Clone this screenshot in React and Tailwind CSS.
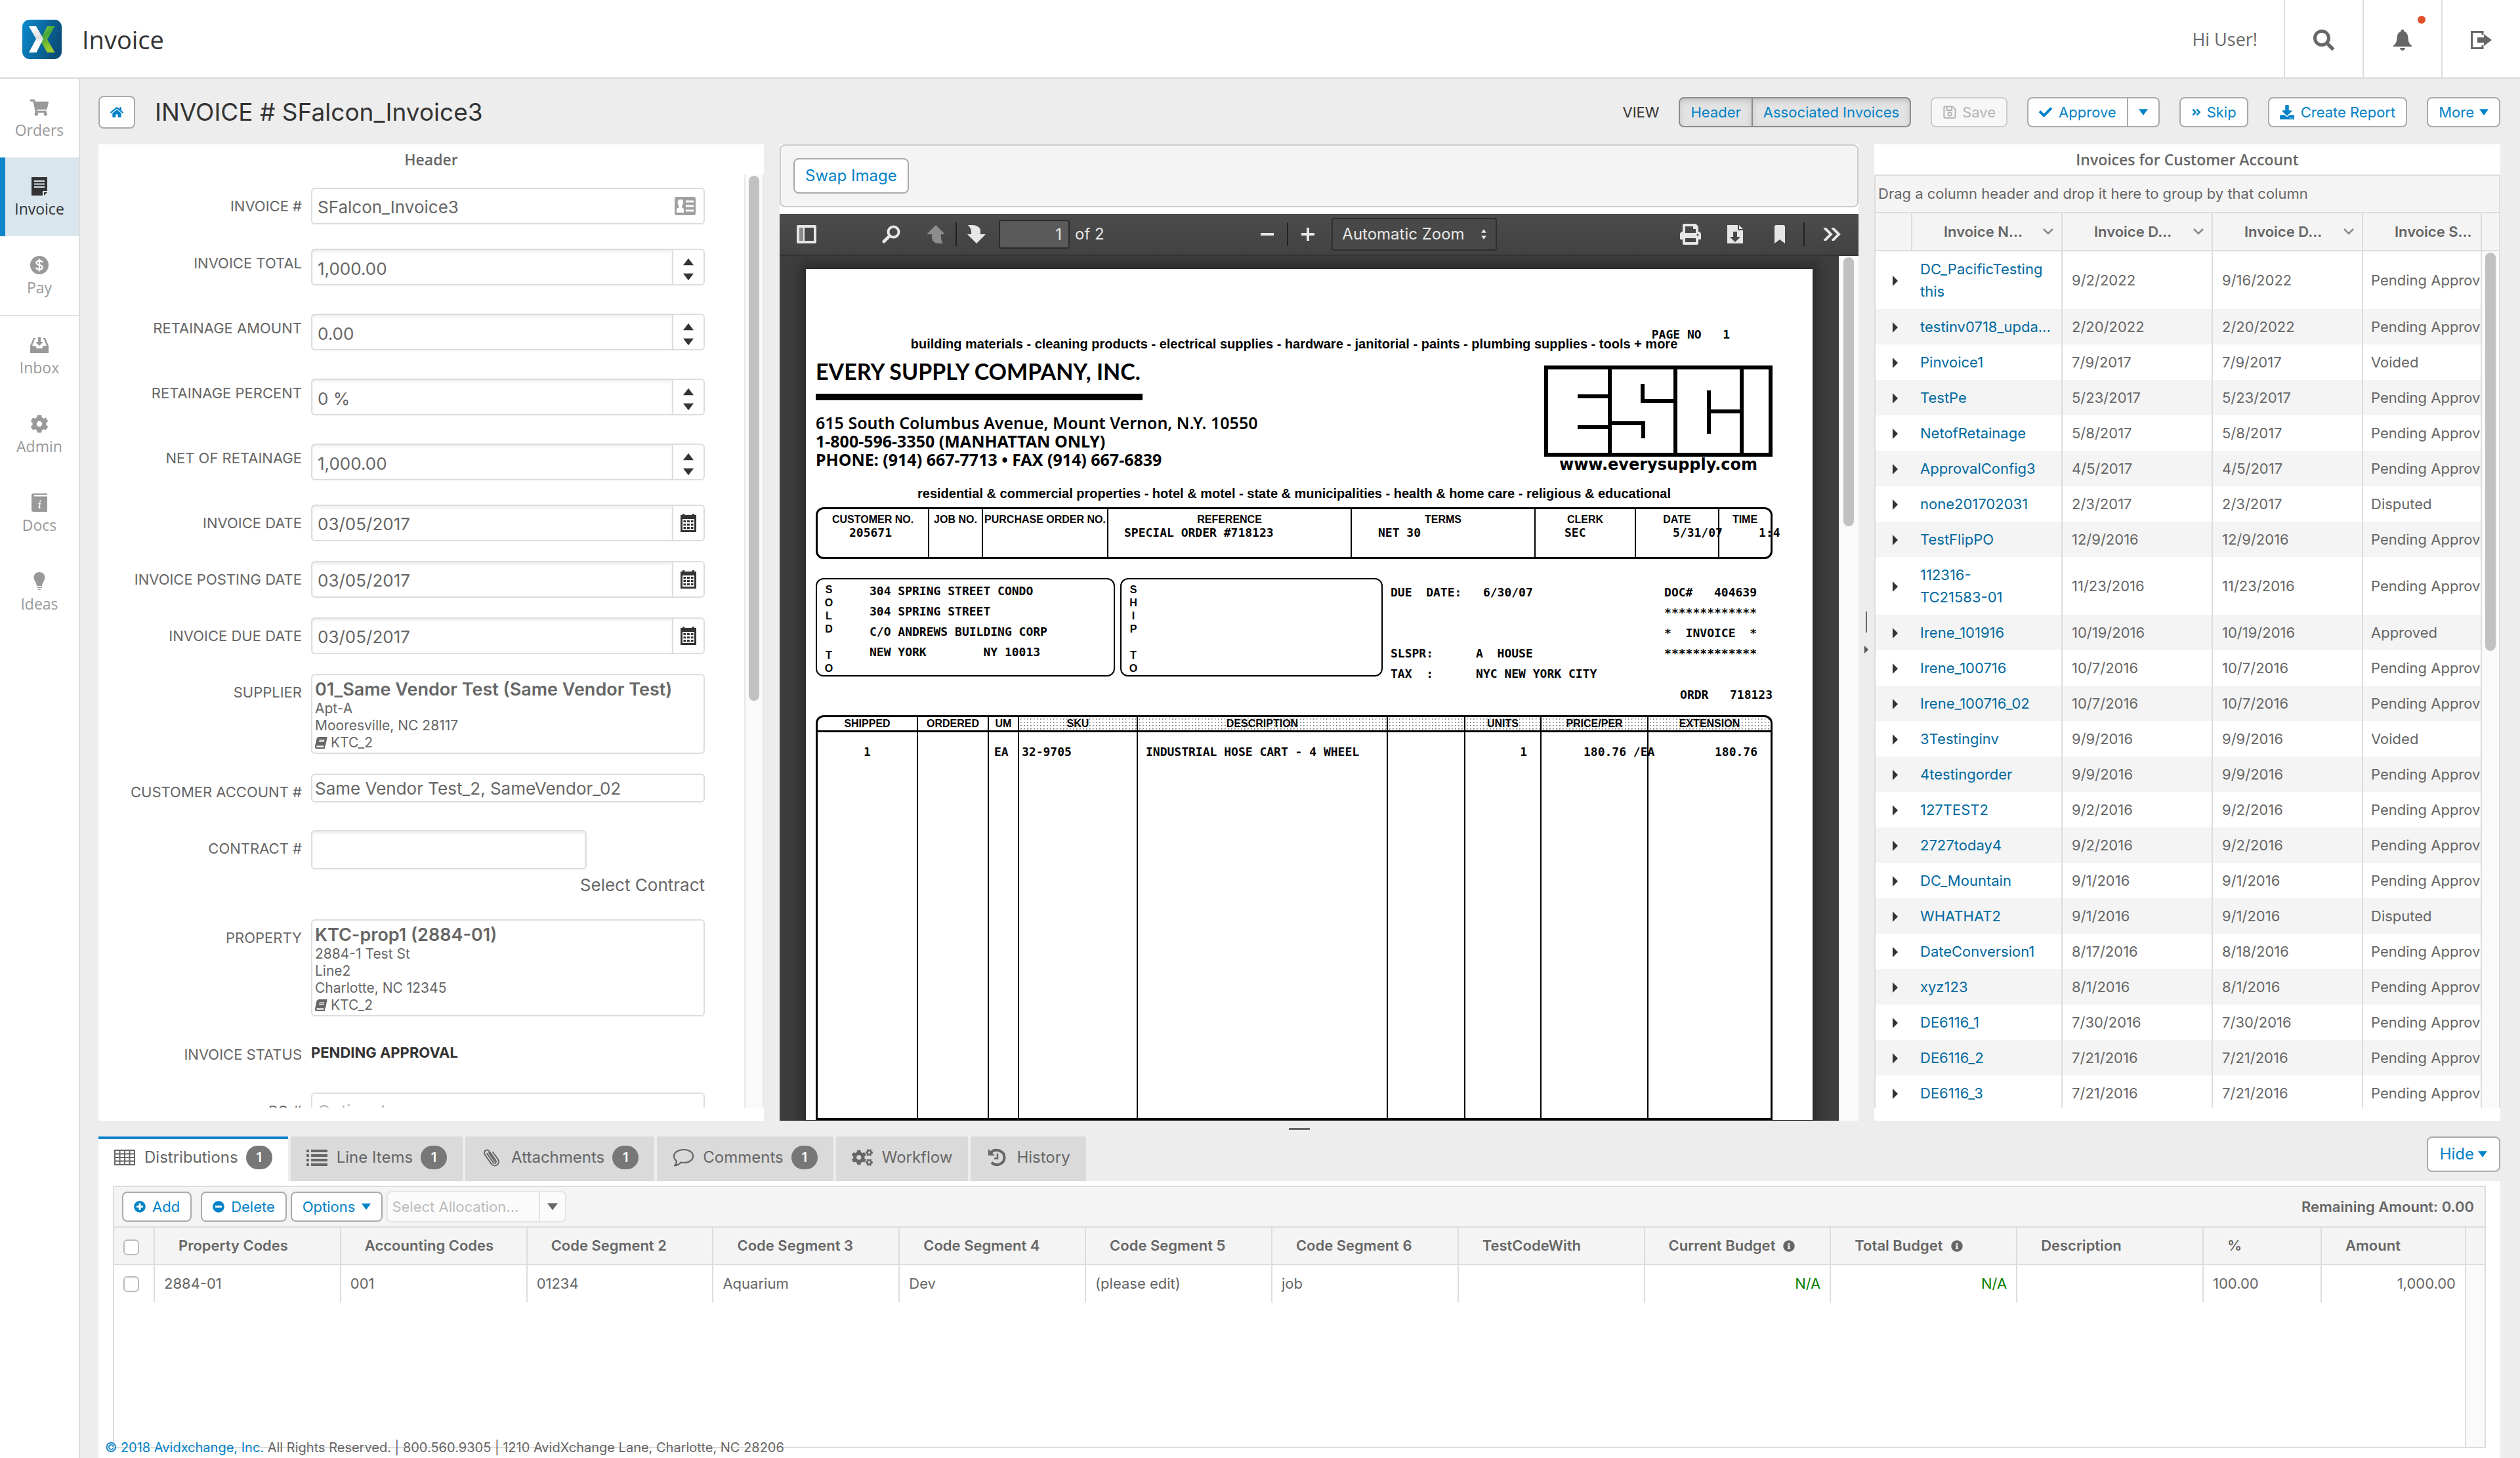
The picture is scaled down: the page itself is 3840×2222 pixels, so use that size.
import {
  FaShoppingCart,
  FaCog,
  FaCogs,
  FaHome,
  FaSearch,
  FaCheck,
  FaRegSave,
  FaAngleDoubleRight,
  FaDownload,
  FaBook,
  FaPlusCircle,
  FaMinusCircle,
  FaInfoCircle,
  FaPrint,
  FaBookmark,
} from "react-icons/fa";

const invoices = [
  { name: "DC_PacificTesting\nthis", date: "9/2/2022", due: "9/16/2022", status: "Pending Approval", tall: true },
  { name: "testinv0718_upda...", date: "2/20/2022", due: "2/20/2022", status: "Pending Approval" },
  { name: "Pinvoice1", date: "7/9/2017", due: "7/9/2017", status: "Voided" },
  { name: "TestPe", date: "5/23/2017", due: "5/23/2017", status: "Pending Approval" },
  { name: "NetofRetainage", date: "5/8/2017", due: "5/8/2017", status: "Pending Approval" },
  { name: "ApprovalConfig3", date: "4/5/2017", due: "4/5/2017", status: "Pending Approval" },
  { name: "none201702031", date: "2/3/2017", due: "2/3/2017", status: "Disputed" },
  { name: "TestFlipPO", date: "12/9/2016", due: "12/9/2016", status: "Pending Approval" },
  { name: "112316-\nTC21583-01", date: "11/23/2016", due: "11/23/2016", status: "Pending Approval", tall: true },
  { name: "Irene_101916", date: "10/19/2016", due: "10/19/2016", status: "Approved" },
  { name: "Irene_100716", date: "10/7/2016", due: "10/7/2016", status: "Pending Approval" },
  { name: "Irene_100716_02", date: "10/7/2016", due: "10/7/2016", status: "Pending Approval" },
  { name: "3Testinginv", date: "9/9/2016", due: "9/9/2016", status: "Voided" },
  { name: "4testingorder", date: "9/9/2016", due: "9/9/2016", status: "Pending Approval" },
  { name: "127TEST2", date: "9/2/2016", due: "9/2/2016", status: "Pending Approval" },
  { name: "2727today4", date: "9/2/2016", due: "9/2/2016", status: "Pending Approval" },
  { name: "DC_Mountain", date: "9/1/2016", due: "9/1/2016", status: "Pending Approval" },
  { name: "WHATHAT2", date: "9/1/2016", due: "9/1/2016", status: "Disputed" },
  { name: "DateConversion1", date: "8/17/2016", due: "8/18/2016", status: "Pending Approval" },
  { name: "xyz123", date: "8/1/2016", due: "8/1/2016", status: "Pending Approval" },
  { name: "DE6116_1", date: "7/30/2016", due: "7/30/2016", status: "Pending Approval" },
  { name: "DE6116_2", date: "7/21/2016", due: "7/21/2016", status: "Pending Approval" },
  { name: "DE6116_3", date: "7/21/2016", due: "7/21/2016", status: "Pending Approval" },
];

const distributionColumns = [
  { title: "Property Codes", value: "2884-01" },
  { title: "Accounting Codes", value: "001" },
  { title: "Code Segment 2", value: "01234" },
  { title: "Code Segment 3", value: "Aquarium" },
  { title: "Code Segment 4", value: "Dev" },
  { title: "Code Segment 5", value: "(please edit)" },
  { title: "Code Segment 6", value: "job" },
  { title: "TestCodeWith", value: "" },
  { title: "Current Budget", value: "N/A", info: true },
  { title: "Total Budget", value: "N/A", info: true },
  { title: "Description", value: "" },
];

/* ---------- Small shapes ---------- */

const Triangle = ({ dir = "down", className = "" }) => {
  const points = { down: "0,2 12,2 6,10", up: "0,10 12,10 6,2", right: "3,0 9,6 3,12" };
  return (
    <svg viewBox="0 0 12 12" className={className} fill="currentColor" aria-hidden="true">
      <polygon points={points[dir]} />
    </svg>
  );
};

const Logo = () => (
  <svg viewBox="0 0 60 60" className="size-15" aria-hidden="true">
    <defs>
      <linearGradient id="logoBlue" x1="0" y1="0" x2="1" y2="0.3">
        <stop offset="0" stopColor="#0a8bd0" />
        <stop offset="1" stopColor="#0a4f7c" />
      </linearGradient>
      <linearGradient id="logoGreen" x1="0" y1="0" x2="0.4" y2="1">
        <stop offset="0" stopColor="#a5cf3a" />
        <stop offset="0.4" stopColor="#43a63c" />
        <stop offset="1" stopColor="#a0d02f" />
      </linearGradient>
      <linearGradient id="logoWhite" x1="0" y1="0" x2="0" y2="1">
        <stop offset="0" stopColor="#ffffff" />
        <stop offset="0.45" stopColor="#d8dde0" />
        <stop offset="0.6" stopColor="#ffffff" />
      </linearGradient>
    </defs>
    <rect width="60" height="60" rx="11" fill="url(#logoBlue)" />
    <path d="M38 10H49.500L38 30L49.500 50H38L27 31Z" fill="url(#logoGreen)" />
    <path d="M10 10H21L32 29L21.500 50H10L21 29.500Z" fill="url(#logoWhite)" />
  </svg>
);

const BillIcon = ({ className }) => (
  <svg viewBox="0 0 24 28" className={className} fill="currentColor" aria-hidden="true">
    <path d="M0 0H24V21H17V28H0ZM4 5V7H20V5ZM4 9.500V11.500H20V9.500ZM4 14V16H20V14ZM19 23H24L19 28Z" fillRule="evenodd" />
  </svg>
);

const CoinIcon = ({ className }) => (
  <svg viewBox="0 0 28 28" className={className} aria-hidden="true">
    <circle cx="14" cy="14" r="14" fill="currentColor" />
    <path d="M18.500 10C18 8 16.300 7.300 14 7.300C11.500 7.300 9.500 8.500 9.500 10.600C9.500 15.200 18.700 12.600 18.700 17.300C18.700 19.600 16.500 20.700 14 20.700C11.500 20.700 9.500 19.800 9 17.500M14 4.500V23.500" fill="none" stroke="#fff" strokeWidth="2.400" />
  </svg>
);

const InboxIcon = ({ className }) => (
  <svg viewBox="0 0 28 24" className={className} fill="currentColor" aria-hidden="true">
    <path d="M5 1H8V3H6.800L3 13H8L10 17H18L20 13H25L21.200 3H20V1H23L28 13V24H0V13Z" />
    <path d="M12 0H16V7H20L14 13L8 7H12Z" />
  </svg>
);

const DocsIcon = ({ className }) => (
  <svg viewBox="0 0 24 28" className={className} aria-hidden="true">
    <path d="M3 0H24V2H4V4.500H24V28H3Q0 28 0 25V3Q0 0 3 0Z" fill="currentColor" />
    <path d="M12.500 11.500H14.500M10.500 15H13L11.500 21.500H13.500" stroke="#fff" strokeWidth="1.800" fill="none" />
  </svg>
);

const BulbIcon = ({ className }) => (
  <svg viewBox="0 0 18 28" className={className} fill="currentColor" aria-hidden="true">
    <path d="M9 0C14 0 17.500 3.500 17.500 8C17.500 13 13.500 15 13 21H5C4.500 15 0.500 13 0.500 8C0.500 3.500 4 0 9 0ZM5 22.500H13V24H5ZM6.500 25.500H11.500L10.500 27H7.500Z" />
  </svg>
);

const BellIcon = ({ className }) => (
  <svg viewBox="0 0 28 32" className={className} fill="currentColor" aria-hidden="true">
    <path d="M14 0C15.500 0 16.500 1 16.500 3C21 4.500 22 8 22.500 13C23 19 24 22 28 24.500V26H0V24.500C4 22 5 19 5.500 13C6 8 7 4.500 11.500 3C11.500 1 12.500 0 14 0ZM10 28H18C17.500 30.500 16 32 14 32C12 32 10.500 30.500 10 28Z" />
  </svg>
);

const LogoutIcon = ({ className }) => (
  <svg viewBox="0 0 32 28" className={className} aria-hidden="true">
    <path d="M18 6V1.500H1.500V26.500H18V22" fill="none" stroke="currentColor" strokeWidth="3" />
    <path d="M10 10H20V5L32 14L20 23V18H10Z" fill="currentColor" />
  </svg>
);

const ContactIcon = ({ className }) => (
  <svg viewBox="0 0 32 28" className={className} aria-hidden="true">
    <rect width="32" height="28" rx="3" fill="currentColor" />
    <path d="M3 24V19Q3 17 6.500 16.500V14Q4.500 12 4.500 8Q5 4 9 4Q13 4 13 8Q13 12 11 14V16.500Q14 17 14 19V24Z" fill="#fff" />
    <path d="M17 5.500H29V8.500H17ZM17 12.500H29V15.500H17ZM17 19.500H29V22.500H17Z" fill="#fff" />
  </svg>
);

const CalendarIcon = ({ className }) => (
  <svg viewBox="0 0 26 28" className={className} fill="currentColor" aria-hidden="true">
    <path d="M4 0H7V2H19V0H22V2H25V28H1V2H4ZM4 8V25H22V8Z" fillRule="evenodd" />
    <path d="M5.500 10H9V13H5.500ZM11 10H15V13H11ZM17 10H20.500V13H17ZM5.500 15H9V18H5.500ZM11 15H15V18H11ZM17 15H20.500V18H17ZM5.500 20H9V23H5.500ZM11 20H15V23H11ZM17 20H20.500V23H17Z" />
  </svg>
);

const GridIcon = ({ className }) => (
  <svg viewBox="0 0 32 24" className={className} aria-hidden="true">
    <path d="M1 1H31V23H1ZM1 6.500H31M1 12H31M1 17.500H31M8.500 1V23M16 1V23M23.500 1V23" fill="none" stroke="currentColor" strokeWidth="2" />
  </svg>
);

const ListIcon = ({ className }) => (
  <svg viewBox="0 0 32 28" className={className} fill="currentColor" aria-hidden="true">
    <path d="M0 2H4V6H0ZM0 9H4V13H0ZM0 16H4V20H0ZM0 23H4V27H0ZM7 2H32V6H7ZM7 9H32V13H7ZM7 16H32V20H7ZM7 23H32V27H7Z" />
  </svg>
);

const ClipIcon = ({ className }) => (
  <svg viewBox="0 0 28 28" className={className} fill="none" stroke="currentColor" strokeWidth="2" strokeLinecap="round" aria-hidden="true">
    <path d="M7 8L16 21C18.500 24.500 22.500 22 20 18L11 5C7.500 0 0.500 4 4 10L13 23C18 30 28 25 24 17L16 6M10 7L18.500 19.500" />
  </svg>
);

const CommentIcon = ({ className }) => (
  <svg viewBox="0 0 32 28" className={className} fill="none" stroke="currentColor" strokeWidth="2.200" strokeLinejoin="round" aria-hidden="true">
    <path d="M17 2C25 2 31 6 31 12C31 18 25 22 17 22C15.500 22 14 21.800 12.500 21.500C10 24.500 6.500 26 3 26.500C5 24.500 6 22 6 19.500C3.500 17.500 2 15 2 12C2 6 9 2 17 2Z" />
  </svg>
);

const HistoryIcon = ({ className }) => (
  <svg viewBox="0 0 28 28" className={className} fill="none" stroke="currentColor" aria-hidden="true">
    <path d="M5 6.500C11 -0.500 25.500 3 25.500 14C25.500 24.500 12 28.500 6 21.500" strokeWidth="4" />
    <path d="M1 1V11H11Z" fill="currentColor" stroke="none" />
    <path d="M15 8V15.500H10" strokeWidth="2.500" />
  </svg>
);

const EscLogo = () => (
  <svg viewBox="0 0 348 139" className="h-[139px] w-[348px]" fill="none" stroke="#000" strokeWidth="6" aria-hidden="true">
    <path d="M3 3H345V136H3ZM100 3V136M200 3V136M301 3V136" />
    <path d="M51 47H100M51 94H100M150 28V54H200M100 88H151V111M251 38V104M251 70H301" />
  </svg>
);

/* ---------- Top bar and side menu ---------- */

const TopBar = () => (
  <header className="flex h-30 shrink-0 items-stretch border-b-2 border-[#d9d9d9] bg-white">
    <div className="flex items-center gap-[31px] pt-0.5 pl-[34px] font-['Open_Sans',sans-serif] text-[38px] text-[#333]">
      <Logo />
      <span>Invoice</span>
    </div>
    <div className="ml-auto flex items-center pt-0.5 pr-10 font-['Open_Sans',sans-serif] text-[27px]">Hi User!</div>
    <button aria-label="Search" className="flex w-30 items-center justify-center border-l-2 border-[#ddd] pt-1">
      <FaSearch className="size-8" />
    </button>
    <button aria-label="Notifications" className="relative flex w-30 items-center justify-center border-l-2 border-[#ddd] pt-1">
      <BellIcon className="h-8 w-7" />
      <span className="absolute top-6 right-6 size-3 rounded-full bg-[#e2512a]"></span>
    </button>
    <button aria-label="Log out" className="flex w-30 items-center justify-center border-l-2 border-[#ddd] pt-1">
      <LogoutIcon className="h-7 w-8" />
    </button>
  </header>
);

const menu = [
  { label: "Orders", icon: FaShoppingCart },
  { label: "Invoice", icon: BillIcon, active: true },
  { label: "Pay", icon: CoinIcon, divider: true },
  { label: "Inbox", icon: InboxIcon },
  { label: "Admin", icon: FaCog },
  { label: "Docs", icon: DocsIcon },
  { label: "Ideas", icon: BulbIcon },
];

const SideMenu = () => (
  <nav className="flex w-[122px] shrink-0 flex-col border-r-2 border-[#ddd] bg-white font-['Open_Sans',sans-serif] text-[23px] leading-8">
    {menu.map(({ label, icon: Icon, active, divider }) => (
      <a
        key={label}
        href="#"
        className={`flex flex-col items-center gap-1 pt-[30px] ${
          active ? "bg-[#d9e6ee] text-[#333] shadow-[inset_8px_0_0_#0a84cb]" : "text-[#999]"
        } ${divider ? "h-[122px] border-b-2 border-[#e2e2e2]" : "h-30"}`}
      >
        <Icon className="h-7 w-7" />
        <span>{label}</span>
      </a>
    ))}
  </nav>
);

/* ---------- Title row ---------- */

const btn = "flex h-[46px] items-center justify-center rounded-lg border-2 border-[#aaa] bg-white text-[#0082c8]";

const TitleRow = () => (
  <div className="flex h-[100px] shrink-0 items-center pt-0.5">
    <button aria-label="Home" className="flex h-[50px] w-14 items-center justify-center rounded-lg border-2 border-[#aaa] bg-white text-[#0082c8]">
      <FaHome className="size-5" />
    </button>
    <h1 className="ml-[30px] text-[37px] text-[#333]">INVOICE # SFalcon_Invoice3</h1>
    <div className="ml-auto flex items-center gap-[30px] text-[22px]">
      <span className="text-[#333]">VIEW</span>
      <div className="flex h-[46px] overflow-hidden rounded-lg border-2 border-[#8c8c8c] bg-[#e3e3e3] text-[#0082c8]">
        <button className="border-r-2 border-[#8c8c8c] px-4 shadow-[inset_0_4px_8px_rgba(0,0,0,0.15)]">Header</button>
        <button className="px-4 shadow-[inset_0_4px_8px_rgba(0,0,0,0.15)]">Associated Invoices</button>
      </div>
      <button disabled className="flex h-[46px] items-center gap-2 rounded-lg border-2 border-[#ccc] bg-[#f7f7f7] px-4 text-[#b5b5b5]">
        <FaRegSave className="size-[22px]" /> Save
      </button>
      <div className="flex">
        <button className={`${btn} gap-2.5 rounded-r-none px-4`}>
          <FaCheck className="size-5" /> Approve
        </button>
        <button aria-label="More approve options" className={`${btn} w-12 rounded-l-none border-l-0`}>
          <Triangle className="size-3.5" />
        </button>
      </div>
      <button className={`${btn} gap-2 px-4`}>
        <FaAngleDoubleRight className="size-4" /> Skip
      </button>
      <button className={`${btn} gap-2.5 px-4`}>
        <FaDownload className="size-[22px]" /> Create Report
      </button>
      <button className={`${btn} gap-2 px-4`}>
        More <Triangle className="size-3.5" />
      </button>
    </div>
  </div>
);

/* ---------- Header form ---------- */

const Row = ({ id, label, labelClass = "h-14", className = "", children }) => (
  <div className={`grid grid-cols-[310px_1fr] items-start gap-x-3.5 ${className}`}>
    <label htmlFor={id} className={`flex items-center justify-end text-[22px] ${labelClass}`}>
      {label}
    </label>
    <div>{children}</div>
  </div>
);

const box = "rounded-md border-2 border-[#ddd] bg-white";

const NumberRow = ({ id, label, value, className = "mb-[43px]" }) => (
  <Row id={id} label={label} labelClass="h-11" className={className}>
    <div className={`${box} flex h-14`}>
      <input id={id} defaultValue={value} className="min-w-0 flex-1 px-2 pt-1 text-[26px] shadow-[inset_0_3px_4px_rgba(0,0,0,0.07)] outline-none" />
      <div className="flex w-12 flex-col items-center justify-around border-l-2 border-[#ddd] pt-1.5 text-[#333]">
        <button aria-label={`Increase ${label}`}>
          <Triangle dir="up" className="size-4" />
        </button>
        <button aria-label={`Decrease ${label}`}>
          <Triangle className="size-4" />
        </button>
      </div>
    </div>
  </Row>
);

const DateRow = ({ id, label }) => (
  <Row id={id} label={label} className="mb-[30px]">
    <div className={`${box} flex h-14`}>
      <input id={id} defaultValue="03/05/2017" className="min-w-0 flex-1 px-2 pt-0.5 text-[26px] shadow-[inset_0_3px_4px_rgba(0,0,0,0.07)] outline-none" />
      <button aria-label={`Pick ${label}`} className="flex w-12 items-center justify-center border-l-2 border-[#ddd] text-[#333]">
        <CalendarIcon className="h-7 w-[26px]" />
      </button>
    </div>
  </Row>
);

const AddressBox = ({ title, lines, className }) => (
  <div className={`${box} flex flex-col px-1 pt-1.5 text-[21px] leading-[26px] ${className}`}>
    <strong className="text-[27px] leading-8 font-semibold whitespace-nowrap">{title}</strong>
    {lines.map((line) => (
      <span key={line}>{line}</span>
    ))}
    <span className="flex items-center gap-1.5">
      <FaBook className="size-[18px] -skew-x-12" /> KTC_2
    </span>
  </div>
);

const HeaderPanel = () => (
  <section className="flex min-h-0 flex-col bg-white pb-5">
    <h2 className="shrink-0 text-center font-['Open_Sans',sans-serif] text-[23px] leading-[46px] font-semibold">Header</h2>
    <div className="flex min-h-0 flex-1">
      <form className="min-w-0 flex-1 overflow-hidden pt-5 pr-[60px]">
        <Row id="invoiceNo" label="INVOICE #" className="mb-[37px]">
          <div className={`${box} flex h-14 items-center pr-3`}>
            <input id="invoiceNo" defaultValue="SFalcon_Invoice3" className="h-full min-w-0 flex-1 px-2 pt-0.5 text-[26px] outline-none" />
            <ContactIcon className="h-7 w-8 text-[#a0a0a0]" />
          </div>
        </Row>
        <NumberRow id="total" label="INVOICE TOTAL" value="1,000.00" />
        <NumberRow id="retAmount" label="RETAINAGE AMOUNT" value="0.00" />
        <NumberRow id="retPercent" label="RETAINAGE PERCENT" value="0 %" />
        <NumberRow id="net" label="NET OF RETAINAGE" value="1,000.00" className="mb-[37px]" />
        <DateRow id="invDate" label="INVOICE DATE" />
        <DateRow id="postDate" label="INVOICE POSTING DATE" />
        <DateRow id="dueDate" label="INVOICE DUE DATE" />
        <Row label="SUPPLIER" className="mb-[30px]">
          <AddressBox className="h-[122px]" title="01_Same Vendor Test (Same Vendor Test)" lines={["Apt-A", "Mooresville, NC 28117"]} />
        </Row>
        <Row id="account" label="CUSTOMER ACCOUNT #" className="mb-[30px]">
          <input id="account" defaultValue="Same Vendor Test_2, SameVendor_02" className={`${box} block h-11 w-full px-1 text-[26px] outline-none`} />
        </Row>
        <Row id="contract" label="CONTRACT #" className="mb-9">
          <input id="contract" className={`${box} block h-15 w-[70%] px-2 text-[26px] shadow-[inset_0_3px_4px_rgba(0,0,0,0.07)] outline-none`} />
          <a href="#" className="mt-2 block text-right text-[26px] leading-8">
            Select Contract
          </a>
        </Row>
        <Row label="PROPERTY" className="mb-[30px]">
          <AddressBox className="h-[148px]" title="KTC-prop1 (2884-01)" lines={["2884-1 Test St", "Line2", "Charlotte, NC 12345"]} />
        </Row>
        <Row label="INVOICE STATUS" className="mb-[30px]">
          <strong className="block text-[22px] leading-[50px] font-bold text-[#333]">PENDING APPROVAL</strong>
        </Row>
        <Row id="po" label="PO #">
          <input id="po" placeholder="Optional" className={`${box} h-14 w-full px-2 text-[26px] placeholder:text-[#b5b5b5]`} />
        </Row>
      </form>
      <div className="w-[30px] shrink-0 border-x-2 border-[#e8e8e8] bg-[#fafafa] pt-0.5">
        <div className="mx-auto h-[800px] w-4 rounded-full bg-[#c1c1c1]"></div>
      </div>
    </div>
  </section>
);

/* ---------- Scanned document ---------- */

const Separator = ({ className = "" }) => <span className={`h-9 w-0.5 bg-[#222] ${className}`}></span>;

const PdfToolbar = () => (
  <div className="flex h-16 shrink-0 items-center border-b-2 border-[#333] bg-linear-to-b from-[#4c4c4c] to-[#424242] pr-[26px] pl-[26px] text-[24px] text-[#e6e6e6]">
    <button aria-label="Toggle sidebar">
      <svg viewBox="0 0 30 28" className="h-7 w-[30px]">
        <path d="M0 2Q0 0 2 0H28Q30 0 30 2V26Q30 28 28 28H2Q0 28 0 26ZM12 4V24H26V4Z" fill="currentColor" fillRule="evenodd" />
        <path d="M4 4H10V24H4Z" fill="#8a8a8a" />
      </svg>
    </button>
    <button aria-label="Find" className="ml-[100px]">
      <svg viewBox="0 0 28 28" className="size-7" fill="none" stroke="currentColor">
        <circle cx="17.500" cy="10.500" r="8" strokeWidth="4" />
        <path d="M11.500 16.500L3 25" strokeWidth="5" strokeLinecap="round" />
      </svg>
    </button>
    <button aria-label="Previous page" className="ml-10 text-[#8d8d8d]">
      <svg viewBox="0 0 28 28" className="size-7" fill="currentColor">
        <path d="M14 0L28 14H22Q21 22 25 28Q10 30 8 20V14H0Z" />
      </svg>
    </button>
    <Separator className="ml-4" />
    <button aria-label="Next page" className="ml-4">
      <svg viewBox="0 0 28 28" className="size-7" fill="currentColor">
        <path d="M14 28L0 14H6Q7 6 1 0Q20 -1 20 9V14H28Z" />
      </svg>
    </button>
    <input aria-label="Page" defaultValue="1" className="ml-5 h-11 w-[108px] rounded border-2 border-[#2b2b2b] bg-[#5a5a5a] pr-2.5 text-right" />
    <span className="ml-2">of 2</span>
    <div className="mr-10 ml-auto flex items-center">
      <button aria-label="Zoom out" className="h-1 w-5 bg-[#e6e6e6]"></button>
      <Separator className="mx-5" />
      <button aria-label="Zoom in">
        <svg viewBox="0 0 20 20" className="size-5">
          <path d="M8 0H12V8H20V12H12V20H8V12H0V8H8Z" fill="currentColor" />
        </svg>
      </button>
      <div className="relative ml-[26px]">
        <select aria-label="Zoom" className="h-[50px] w-[252px] appearance-none rounded border-2 border-[#2e2e2e] bg-[#484848] pl-3.5 text-[24px]">
          <option>Automatic Zoom</option>
        </select>
        <span className="pointer-events-none absolute top-4 right-3.5 flex flex-col gap-0.5">
          <Triangle dir="up" className="h-2 w-3" />
          <Triangle className="h-2 w-3" />
        </span>
      </div>
    </div>
    <div className="ml-auto flex items-center">
      <button aria-label="Print">
        <FaPrint className="size-8" />
      </button>
      <button aria-label="Download" className="ml-10">
        <svg viewBox="0 0 24 28" className="h-7 w-6">
          <path d="M0 0H16V8H24V28H0ZM18 0L24 6H18ZM9 10V18H4L12 26L20 18H15V10Z" fill="currentColor" fillRule="evenodd" />
        </svg>
      </button>
      <button aria-label="Bookmark" className="ml-12">
        <FaBookmark className="h-7 w-4" preserveAspectRatio="none" />
      </button>
      <Separator className="mx-7" />
      <button aria-label="Tools">
        <svg viewBox="0 0 28 20" className="h-5 w-7" fill="none" stroke="currentColor" strokeWidth="4">
          <path d="M2 0L12 10L2 20M14 0L24 10L14 20" />
        </svg>
      </button>
    </div>
  </div>
);

const orderInfo = [
  { title: "CUSTOMER NO.", value: "205671", col: "w-[168px]", pad: "pl-12" },
  { title: "JOB NO.", value: "", col: "w-[82px]", pad: "" },
  { title: "PURCHASE ORDER NO.", value: "", col: "w-[191px]", pad: "" },
  { title: "REFERENCE", value: "SPECIAL ORDER #718123", col: "w-[371px]", pad: "pl-6" },
  { title: "TERMS", value: "NET 30", col: "w-[280px]", pad: "pl-10" },
  { title: "CLERK", value: "SEC", col: "w-[153px]", pad: "pl-11" },
  { title: "DATE", value: "5/31/07", col: "w-[127px]", pad: "pl-14" },
  { title: "TIME", value: "1:4", col: "w-[80px]", pad: "pl-15" },
];

const lineItem = [
  { title: "SHIPPED", value: "1", col: "w-[151px]", pad: "text-center" },
  { title: "ORDERED", value: "", col: "w-[108px]", pad: "" },
  { title: "UM", value: "EA", col: "w-[46px]", pad: "pl-2" },
  { title: "SKU", value: "32-9705", col: "w-[181px]", pad: "pl-1", dots: true },
  { title: "DESCRIPTION", value: "INDUSTRIAL HOSE CART - 4 WHEEL", col: "w-[381px]", pad: "pl-3", dots: true },
  { title: "", value: "", col: "w-[118px]", pad: "", dots: true },
  { title: "UNITS", value: "1", col: "w-[116px]", pad: "text-right pr-5", dots: true },
  { title: "PRICE/PER", value: "180.76 /EA", col: "w-[163px]", pad: "pl-16", dots: true },
  { title: "EXTENSION", value: "180.76", col: "w-[188px]", pad: "text-right pr-5", dots: true },
];

const SideWord = ({ word }) => (
  <div className="flex w-9 flex-col items-center pt-1.5 font-['Liberation_Sans',sans-serif] text-[16px] leading-5 font-bold">
    {word.split("").map((letter, i) => (
      <span key={i} className="h-5">
        {letter}
      </span>
    ))}
  </div>
);

const ScannedPage = () => (
  <div className="relative mx-auto w-[1534px] bg-white pt-[102px] pr-[61px] pl-[15px] font-['DejaVu_Sans_Mono',monospace] text-[18px] font-bold text-black shadow-[0_0_16px_8px_rgba(0,0,0,0.3)]">
    <span className="absolute top-[86px] right-[126px] whitespace-pre">PAGE NO   1</span>
    <p className="text-center font-['Liberation_Sans',sans-serif] text-[20px] leading-6 whitespace-nowrap">
      building materials - cleaning products - electrical supplies - hardware - janitorial - paints - plumbing supplies - tools + more
    </p>
    <div className="flex items-start justify-between">
      <div className="pt-2 font-['Noto_Sans',sans-serif] text-[25px] leading-7 tracking-normal">
        <h3 className="font-['Lato',sans-serif] text-[34px] leading-[44px]">EVERY SUPPLY COMPANY, INC.</h3>
        <div className="mt-3 mb-5 h-2.5 w-[498px] bg-black"></div>
        <p className="font-semibold">615 South Columbus Avenue, Mount Vernon, N.Y. 10550</p>
        <p>1-800-596-3350 (MANHATTAN ONLY)</p>
        <p>PHONE: (914) 667-7713 • FAX (914) 667-6839</p>
      </div>
      <div className="pt-[21px] text-center font-['DejaVu_Sans',sans-serif] text-[24px] leading-6">
        <EscLogo />
        <a href="#">www.everysupply.com</a>
      </div>
    </div>
    <p className="mt-5 text-center font-['Liberation_Sans',sans-serif] text-[20px] leading-6 whitespace-nowrap">
      residential & commercial properties - hotel & motel - state & municipalities - health & home care - religious & educational
    </p>
    <div className="mt-[9px] rounded-xl border-3 border-black">
      <table className="w-full table-fixed border-separate border-spacing-0">
        <thead className="font-['Liberation_Sans',sans-serif] text-[16px] leading-5 whitespace-nowrap">
          <tr>
            {orderInfo.map((c) => (
              <th key={c.title} className={`${c.col} border-l-2 border-black px-0 pt-1.5 text-center first:border-l-0`}>
                {c.title}
              </th>
            ))}
          </tr>
        </thead>
        <tbody>
          <tr className="align-top leading-5 whitespace-nowrap">
            {orderInfo.map((c) => (
              <td key={c.title} className={`h-[47px] border-l-2 border-black first:border-l-0 ${c.pad}`}>
                {c.value}
              </td>
            ))}
          </tr>
        </tbody>
      </table>
    </div>
    <div className="mt-[29px] flex h-[150px]">
      <div className="flex w-[456px] rounded-xl border-2 border-black">
        <SideWord word="SOLD TO" />
        <p className="ml-11 pt-0.5 leading-[31px] whitespace-pre">
          {"304 SPRING STREET CONDO\n304 SPRING STREET\nC/O ANDREWS BUILDING CORP\nNEW YORK        NY 10013"}
        </p>
      </div>
      <div className="ml-2 flex w-[400px] rounded-xl border-2 border-black">
        <SideWord word="SHIP TO" />
      </div>
      <p className="ml-3 pt-1.5 leading-[31px] whitespace-pre">
        {"DUE  DATE:   6/30/07\n\n\nSLSPR:      A  HOUSE\nTAX  :      NYC NEW YORK CITY"}
      </p>
      <p className="ml-auto pt-1.5 pr-6 text-right leading-[31px] whitespace-pre">
        {"DOC#   404639\n*************\n*  INVOICE  *\n*************"}
      </p>
    </div>
    <p className="mt-3 mb-4 text-right leading-[31px] whitespace-pre">ORDR   718123</p>
    <div className="rounded-t-xl border-3 border-black">
      <table className="w-full table-fixed border-separate border-spacing-0">
        <thead className="font-['Liberation_Sans',sans-serif] text-[16px] leading-5">
          <tr>
            {lineItem.map((c) => (
              <th
                key={c.title}
                className={`${c.col} border-b-3 border-l-2 border-black p-0 text-center first:border-l-0 ${
                  c.dots ? "bg-[radial-gradient(#888_1px,transparent_1px)] bg-size-[5px_5px]" : ""
                }`}
              >
                {c.title}
              </th>
            ))}
          </tr>
        </thead>
        <tbody>
          <tr className="align-top whitespace-nowrap">
            {lineItem.map((c) => (
              <td key={c.title} className={`h-[588px] border-l-2 border-black pt-4 first:border-l-0 ${c.pad}`}>
                {c.value}
              </td>
            ))}
          </tr>
        </tbody>
      </table>
    </div>
  </div>
);

const ImagePanel = () => (
  <section className="flex min-h-0 min-w-0 flex-col bg-white">
    <div className="mb-2.5 flex h-24 shrink-0 items-center rounded-lg border-2 border-[#ccc] bg-[#f4f4f4] pl-[19px]">
      <button className="h-[54px] rounded-lg border-2 border-[#aaa] bg-white px-4 text-[24px] text-[#0082c8]">Swap Image</button>
    </div>
    <PdfToolbar />
    <div className="flex min-h-0 flex-1 bg-[#3d3d3d]">
      <div className="min-w-0 flex-1 overflow-hidden pt-5">
        <ScannedPage />
      </div>
      <div className="w-[30px] shrink-0 bg-[#fafafa] pt-0.5">
        <div className="mx-auto h-[410px] w-4 rounded-full bg-[#c1c1c1]"></div>
      </div>
    </div>
  </section>
);

/* ---------- Related invoices ---------- */

const ChevronDown = () => (
  <svg viewBox="0 0 16 10" className="h-2.5 w-4 shrink-0 text-[#888]" fill="none" stroke="currentColor" strokeWidth="2.500" aria-hidden="true">
    <path d="M1 1L8 8L15 1" />
  </svg>
);

const InvoicesPanel = () => (
  <section className="flex min-h-0 min-w-0 flex-col bg-white pb-5">
    <h2 className="shrink-0 text-center font-['Open_Sans',sans-serif] text-[23px] leading-[46px] font-semibold">
      Invoices for Customer Account
    </h2>
    <div className="flex min-h-0 flex-1 flex-col border-x-2 border-t-2 border-[#ddd] text-[22px]">
      <div className="h-[57px] shrink-0 border-b-2 border-[#ddd] bg-[#f4f4f4] pl-1 leading-[55px]">
        Drag a column header and drop it here to group by that column
      </div>
      <div className="flex min-h-0 flex-1">
        <div className="min-w-0 flex-1 overflow-hidden">
          <table className="w-full table-fixed border-separate border-spacing-0 text-left">
            <thead className="bg-[#f4f4f4]">
              <tr>
                <th className="h-[58px] w-[54px] border-b-2 border-[#ddd]"></th>
                {["Invoice N...", "Invoice D...", "Invoice D...", "Invoice S..."].map((title, i) => (
                  <th key={i} className={`${i < 3 ? "w-[229px]" : ""} border-b-2 border-l-2 border-[#ddd] p-0 pr-3 pl-12 font-semibold`}>
                    <span className="flex items-center justify-between whitespace-nowrap">
                      {title}
                      {i < 3 && <ChevronDown />}
                    </span>
                  </th>
                ))}
              </tr>
            </thead>
            <tbody>
              {invoices.map((inv) => (
                <tr key={inv.name} className="leading-[34px] whitespace-nowrap even:bg-[#f4f4f4]">
                  <td className={`${inv.tall ? "h-[88px]" : "h-[54px]"} p-0 pt-0.5 pl-[22px]`}>
                    <button aria-label={`Expand ${inv.name}`} className="block text-[#333]">
                      <Triangle dir="right" className="size-4" />
                    </button>
                  </td>
                  <td className={`p-0 pl-3.5 ${inv.tall ? "whitespace-pre" : ""}`}>
                    <a href="#" className="text-[#00699f]">
                      {inv.name}
                    </a>
                  </td>
                  <td className="border-l-2 border-[#ddd] p-0 pl-3.5">{inv.date}</td>
                  <td className="border-l-2 border-[#ddd] p-0 pl-3.5">{inv.due}</td>
                  <td className="overflow-hidden border-l-2 border-[#ddd] p-0 pl-3">{inv.status}</td>
                </tr>
              ))}
            </tbody>
          </table>
        </div>
        <div className="flex w-7 shrink-0 flex-col border-l-2 border-[#ddd] bg-[#fafafa]">
          <div className="h-[58px] shrink-0 border-b-2 border-[#ddd] bg-[#f4f4f4]"></div>
          <div className="mx-auto mt-0.5 h-[607px] w-4 rounded-full bg-[#c1c1c1]"></div>
        </div>
      </div>
    </div>
  </section>
);

/* ---------- Bottom tabs ---------- */

const tabs = [
  { label: "Distributions", icon: GridIcon, badge: 1, active: true },
  { label: "Line Items", icon: ListIcon, badge: 1 },
  { label: "Attachments", icon: ClipIcon, badge: 1 },
  { label: "Comments", icon: CommentIcon, badge: 1 },
  { label: "Workflow", icon: FaCogs },
  { label: "History", icon: HistoryIcon },
];

const TabBar = () => (
  <div className="flex h-17 shrink-0 items-start gap-1 text-[24px]">
    {tabs.map(({ label, icon: Icon, badge, active }) => (
      <button
        key={label}
        className={`flex h-17 items-center px-6 pb-1 ${active ? "border-t-4 border-[#0a84cb] bg-white pb-2" : "bg-[#dadada]"}`}
      >
        <Icon className="mr-3.5 h-7 w-8" />
        {label}
        {badge && (
          <span className="ml-3 flex h-9 w-10 items-center justify-center rounded-full bg-[#777] text-[20px] font-semibold text-white">{badge}</span>
        )}
      </button>
    ))}
    <button className="ml-auto flex h-[54px] items-center gap-1.5 rounded-lg border-2 border-[#aaa] bg-white px-[18px] text-[24px] text-[#0082c8]">
      Hide <Triangle className="size-3.5" />
    </button>
  </div>
);

const DistributionsPanel = () => (
  <section className="h-[422px] shrink-0 bg-white px-[22px] pt-[7px] text-[22px]">
    <div className="flex h-[400px] flex-col border-2 border-[#ddd]">
      <div className="flex h-[62px] shrink-0 items-center border-b-2 border-[#ddd] bg-[#f4f4f4] pr-4 pl-3">
        <button className={`${btn} gap-2.5 px-4`}>
          <FaPlusCircle className="size-[18px]" /> Add
        </button>
        <button className={`${btn} ml-3.5 gap-2.5 px-4`}>
          <FaMinusCircle className="size-[18px]" /> Delete
        </button>
        <button className={`${btn} ml-1.5 gap-2.5 px-4`}>
          Options <Triangle className="size-3.5" />
        </button>
        <div className="ml-1.5 flex h-12 w-[274px] rounded-lg border-2 border-[#e5e5e5] bg-[#fbfbfb]">
          <select aria-label="Select Allocation" disabled className="min-w-0 flex-1 appearance-none pl-1.5 text-[#bbb] opacity-100">
            <option>Select Allocation...</option>
          </select>
          <span className="flex w-10 items-center justify-center border-l-2 border-[#e5e5e5] text-[#666]">
            <Triangle className="size-4" />
          </span>
        </div>
        <strong className="ml-auto font-semibold">Remaining Amount: 0.00</strong>
      </div>
      <div className="flex min-h-0 flex-1">
        <div className="min-w-0 flex-1">
          <table className="w-full table-fixed border-separate border-spacing-0 text-left whitespace-nowrap">
            <thead className="bg-[#f4f4f4]">
              <tr>
                <th className="h-[57px] w-[60px] border-b-2 border-[#ddd] p-0 pt-1 pl-3.5">
                  <input type="checkbox" aria-label="Select all" className="block size-6 appearance-none rounded-md border-2 border-[#bbb] bg-white" />
                </th>
                {distributionColumns.map((c) => (
                  <th key={c.title} className="border-b-2 border-l-2 border-[#ddd] p-0 pl-9 font-semibold">
                    <span className="flex items-center gap-3">
                      {c.title}
                      {c.info && <FaInfoCircle className="size-[18px]" />}
                    </span>
                  </th>
                ))}
                <th className="w-[180px] border-b-2 border-l-2 border-[#ddd] p-0 pl-9 font-semibold">%</th>
                <th className="w-[220px] border-b-2 border-l-2 border-[#ddd] p-0 pl-9 font-semibold">Amount</th>
              </tr>
            </thead>
            <tbody>
              <tr>
                <td className="h-[57px] p-0 pl-3.5">
                  <input type="checkbox" aria-label="Select row" className="block size-6 appearance-none rounded-md border-2 border-[#bbb] bg-white" />
                </td>
                {distributionColumns.map((c) => (
                  <td key={c.title} className={`border-l-2 border-[#ddd] p-0 px-3.5 ${c.info ? "text-right text-[#008000]" : ""}`}>
                    {c.value}
                  </td>
                ))}
                <td className="border-l-2 border-[#ddd] p-0 px-3.5">100.00</td>
                <td className="border-l-2 border-[#ddd] p-0 px-3.5 text-right">1,000.00</td>
              </tr>
            </tbody>
          </table>
        </div>
        <div className="w-[30px] shrink-0 border-l-2 border-[#ddd] bg-[#fafafa]">
          <div className="h-[57px] border-b-2 border-[#ddd] bg-[#f4f4f4]"></div>
        </div>
      </div>
    </div>
  </section>
);

export default function App() {
  return (
    <div className="relative flex h-screen flex-col bg-[#ededed] font-['Inter',sans-serif] text-[#666]">
      <TopBar />
      <div className="flex min-h-0 flex-1">
        <SideMenu />
        <main className="flex min-w-0 flex-1 flex-col pr-[30px] pl-7">
          <TitleRow />
          <div className="grid min-h-0 flex-1 grid-cols-[1014fr_24px_1644fr_24px_954fr] grid-rows-[minmax(0,1fr)]">
            <HeaderPanel />
            <div></div>
            <ImagePanel />
            {/* Drag handle */}
            <div className="flex flex-col items-center justify-center gap-5 text-[#555]">
              <span className="h-8 w-0.5 bg-[#666]"></span>
              <Triangle dir="right" className="size-3" />
            </div>
            <InvoicesPanel />
          </div>
          <div className="flex h-6 shrink-0 items-center justify-center">
            <span className="h-[3px] w-8 bg-[#666]"></span>
          </div>
          <TabBar />
          <DistributionsPanel />
        </main>
      </div>
      <footer className="absolute bottom-0.5 left-[160px] text-[20px] leading-7">
        <a href="#" className="text-[#0082c8]">
          © 2018 Avidxchange, Inc.
        </a>{" "}
        All Rights Reserved. | 800.560.9305 | 1210 AvidXchange Lane, Charlotte, NC 28206
      </footer>
    </div>
  );
}
